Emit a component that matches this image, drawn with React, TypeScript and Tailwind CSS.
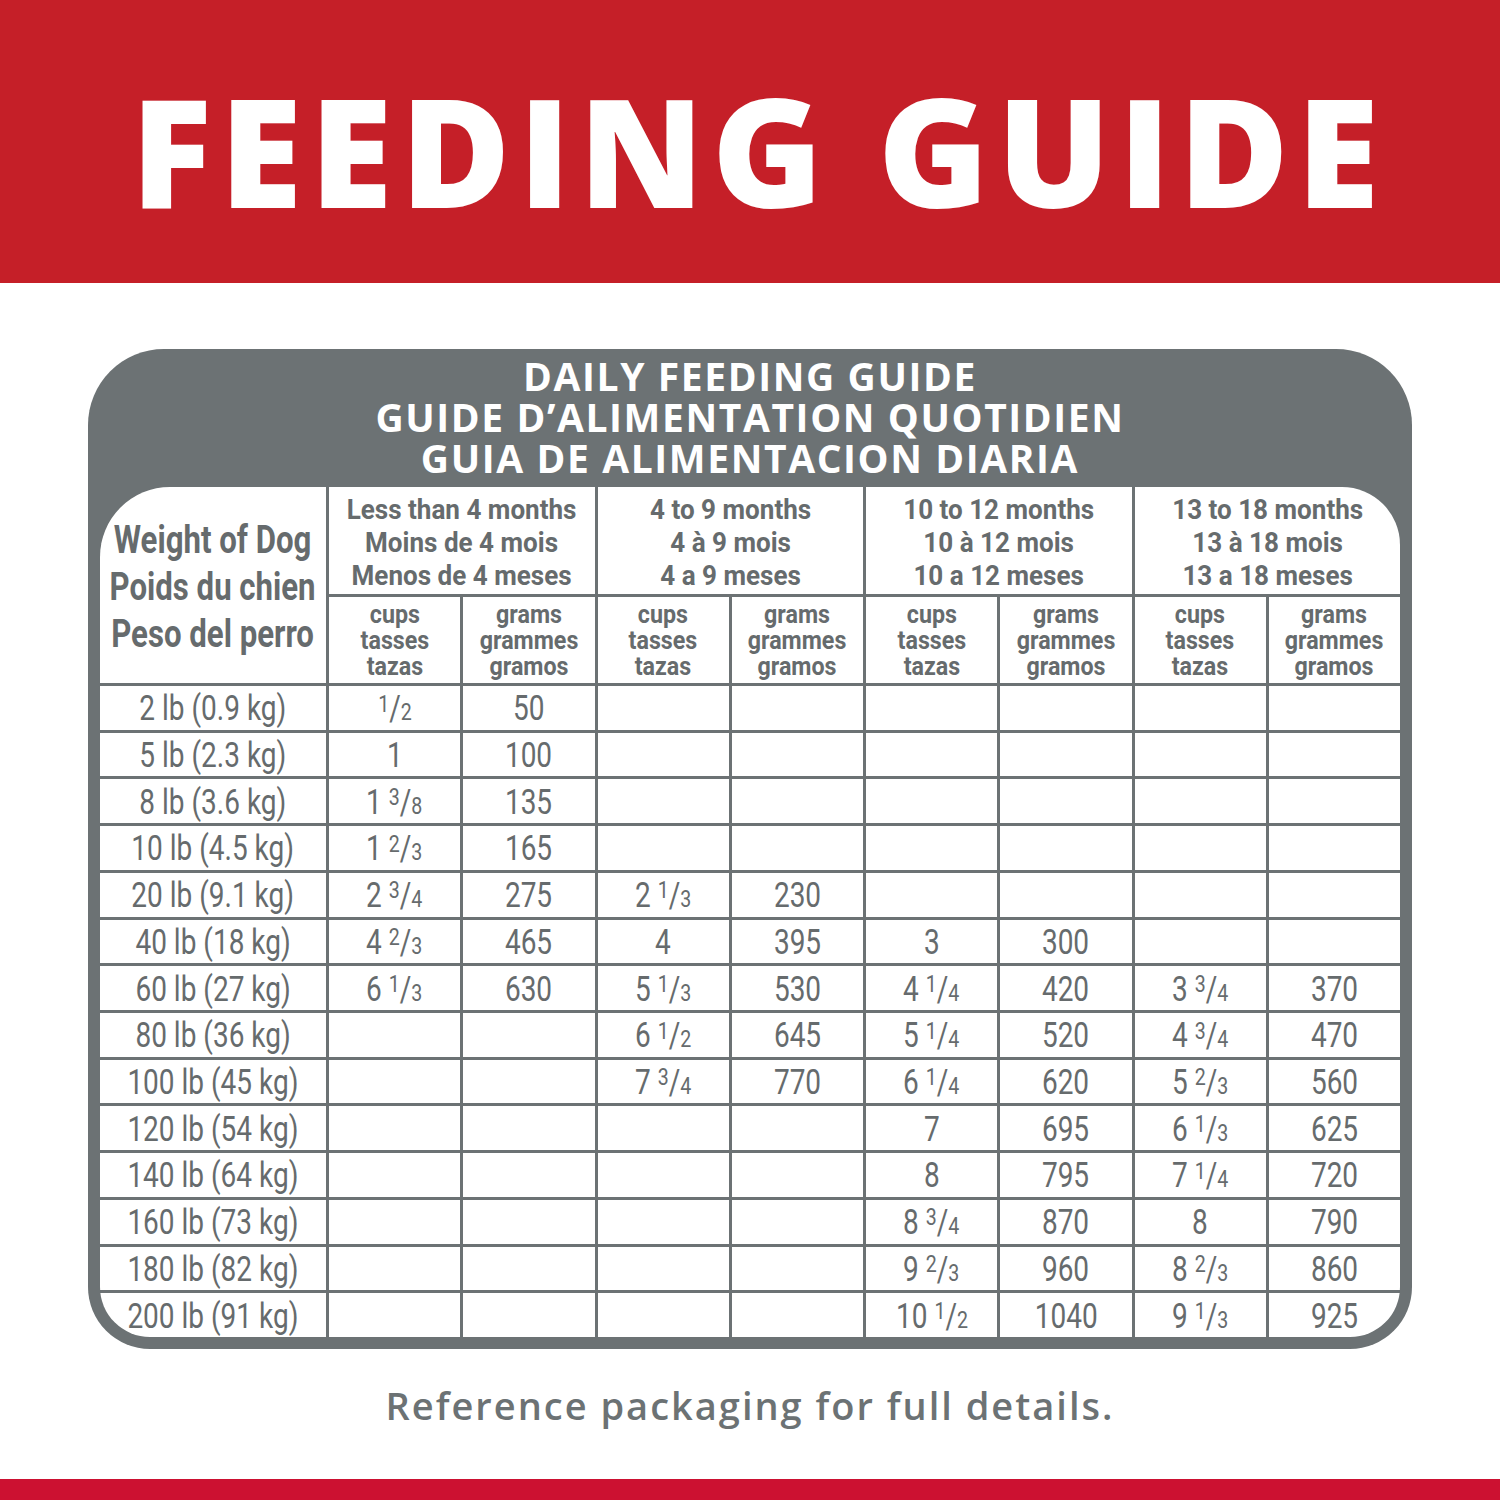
import React from 'react';

const weights = [
    '2 lb (0.9 kg)', '5 lb (2.3 kg)', '8 lb (3.6 kg)', '10 lb (4.5 kg)', '20 lb (9.1 kg)',
    '40 lb (18 kg)', '60 lb (27 kg)', '80 lb (36 kg)', '100 lb (45 kg)', '120 lb (54 kg)',
    '140 lb (64 kg)', '160 lb (73 kg)', '180 lb (82 kg)', '200 lb (91 kg)',
];

// each row: [cups, grams] x 4 age groups, '' = empty cell
const rows: string[][] = [
    ['1/2', '50', '', '', '', '', '', ''],
    ['1', '100', '', '', '', '', '', ''],
    ['1 3/8', '135', '', '', '', '', '', ''],
    ['1 2/3', '165', '', '', '', '', '', ''],
    ['2 3/4', '275', '2 1/3', '230', '', '', '', ''],
    ['4 2/3', '465', '4', '395', '3', '300', '', ''],
    ['6 1/3', '630', '5 1/3', '530', '4 1/4', '420', '3 3/4', '370'],
    ['', '', '6 1/2', '645', '5 1/4', '520', '4 3/4', '470'],
    ['', '', '7 3/4', '770', '6 1/4', '620', '5 2/3', '560'],
    ['', '', '', '', '7', '695', '6 1/3', '625'],
    ['', '', '', '', '8', '795', '7 1/4', '720'],
    ['', '', '', '', '8 3/4', '870', '8', '790'],
    ['', '', '', '', '9 2/3', '960', '8 2/3', '860'],
    ['', '', '', '', '10 1/2', '1040', '9 1/3', '925'],
];

const ages = [
    ['Less than 4 months', 'Moins de 4 mois', 'Menos de 4 meses'],
    ['4 to 9 months', '4 à 9 mois', '4 a 9 meses'],
    ['10 to 12 months', '10 à 12 mois', '10 a 12 meses'],
    ['13 to 18 months', '13 à 18 mois', '13 a 18 meses'],
];

// condensed look: Roboto squeezed horizontally
const Narrow: React.FC<{ children: React.ReactNode; className?: string }> = ({ children, className = '' }) => (
    <span className={`inline-block whitespace-nowrap text-center ${className}`}>{children}</span>
);

const Amount: React.FC<{ value: string }> = ({ value }) => {
    const parts = value.split(' ');
    const frac = parts.find(p => p.includes('/'));
    const whole = parts.find(p => !p.includes('/'));
    if (!frac) return <>{value}</>;
    const [n, d] = frac.split('/');
    return (
        <>
            {whole ? whole + ' ' : ''}
            <span className="relative -top-[0.36em] text-[0.7em]">{n}</span>
            /
            <span className="text-[0.7em]">{d}</span>
        </>
    );
};

export default function App() {
    return (
        <div className="w-[1500px] h-[1500px] bg-white flex flex-col">
            <div className="h-[283px] bg-[#c51f28] flex items-center justify-center pt-[16px] pl-[18px]">
                <h1 className="font-['Open_Sans',sans-serif] font-extrabold text-white text-[150px] leading-none tracking-[8px]">
                    FEEDING GUIDE
                </h1>
            </div>

            <div className="mt-[66px] mx-[88px] h-[1000px] bg-[#6c7274] rounded-t-[76px] rounded-b-[62px] px-[12px] pb-[12px] flex flex-col">
                <div className="h-[138px] flex flex-col items-center justify-center pb-[4px] font-['Open_Sans',sans-serif] font-bold text-white text-[39px] leading-[41px] tracking-[1.6px]">
                    <div>DAILY FEEDING GUIDE</div>
                    <div>GUIDE D’ALIMENTATION QUOTIDIEN</div>
                    <div>GUIA DE ALIMENTACION DIARIA</div>
                </div>

                <div className="flex-1 rounded-tl-[70px] rounded-tr-[58px] rounded-b-[50px] overflow-hidden bg-[#6c7274] grid grid-cols-[226px_repeat(8,1fr)] grid-rows-[107px_86px_repeat(14,1fr)] gap-[3px] text-[#666b6d] font-['Roboto',sans-serif]">
                    <div className="row-span-2 bg-white flex items-center justify-center pt-[4px]">
                        <Narrow className="scale-x-[0.82] font-bold text-[38px] leading-[47px]">
                            <div>Weight of Dog</div>
                            <div>Poids du chien</div>
                            <div>Peso del perro</div>
                        </Narrow>
                    </div>
                    {ages.map(a => (
                        <div key={a[0]} className="col-span-2 bg-white flex items-center justify-center pt-[4px]">
                            <Narrow className="scale-x-[0.93] font-bold text-[28px] leading-[33px]">
                                {a.map(t => <div key={t}>{t}</div>)}
                            </Narrow>
                        </div>
                    ))}
                    {ages.map(a => (
                        <React.Fragment key={a[0]}>
                            <div className="bg-white flex items-center justify-center pt-[2px]">
                                <Narrow className="scale-x-[0.93] font-bold text-[25px] leading-[26px]">
                                    <div>cups</div>
                                    <div>tasses</div>
                                    <div>tazas</div>
                                </Narrow>
                            </div>
                            <div className="bg-white flex items-center justify-center pt-[2px]">
                                <Narrow className="scale-x-[0.93] font-bold text-[25px] leading-[26px]">
                                    <div>grams</div>
                                    <div>grammes</div>
                                    <div>gramos</div>
                                </Narrow>
                            </div>
                        </React.Fragment>
                    ))}
                    {weights.map((w, i) => (
                        <React.Fragment key={w}>
                            <div className="bg-white flex items-center justify-center pt-[2px]">
                                <Narrow className="scale-x-[0.8] font-normal text-[35px] leading-none">{w}</Narrow>
                            </div>
                            {rows[i].map((v, j) => (
                                <div key={j} className="bg-white flex items-center justify-center pt-[2px]">
                                    {v && (
                                        <Narrow className="scale-x-[0.8] font-normal text-[35px] leading-none">
                                            <Amount value={v} />
                                        </Narrow>
                                    )}
                                </div>
                            ))}
                        </React.Fragment>
                    ))}
                </div>
            </div>

            <div className="flex-1 flex items-center justify-center pb-[18px]">
                <p className="font-['Open_Sans',sans-serif] font-semibold text-[#6c7274] text-[38px] leading-none tracking-[2px]">
                    Reference packaging for full details.
                </p>
            </div>
            <div className="h-[21px] bg-[#cc1131]" />
        </div>
    );
}
